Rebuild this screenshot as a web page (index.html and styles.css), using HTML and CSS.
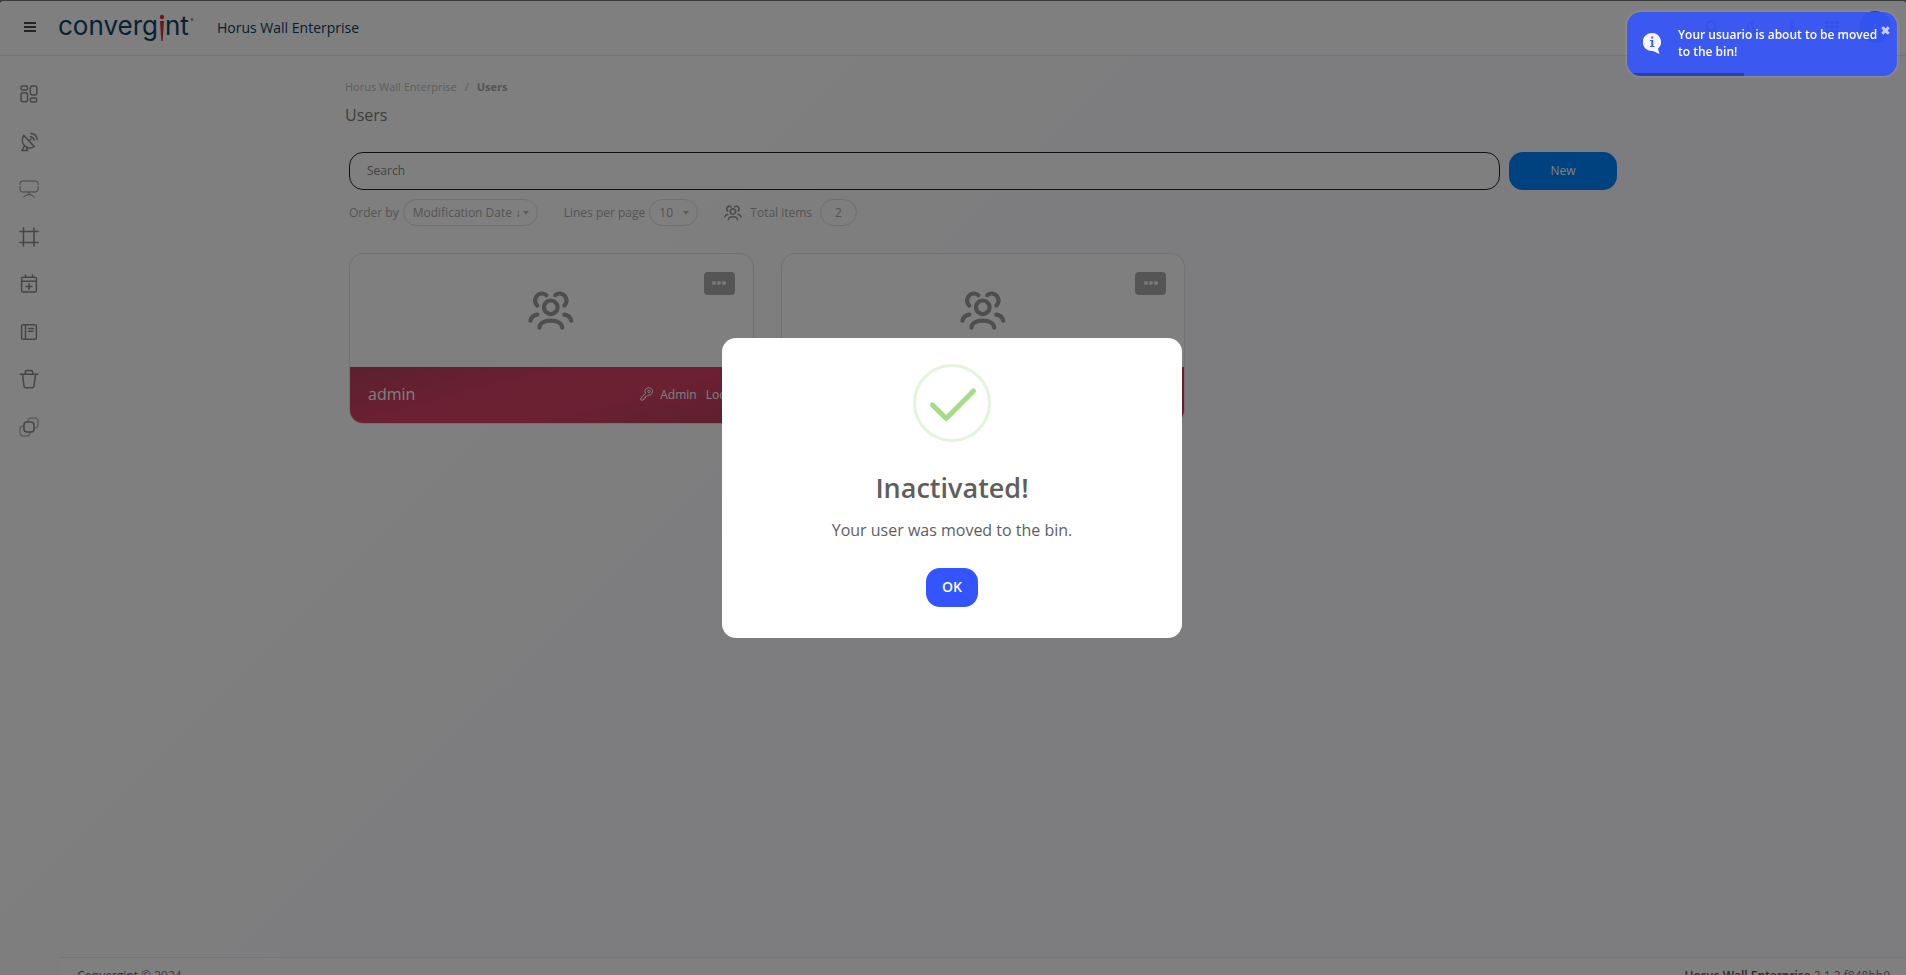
FILE: index.html
```html
<!DOCTYPE html>
<html lang="en">
<head>
<meta charset="utf-8">
<title>Horus Wall Enterprise - Users</title>
<link rel="stylesheet" href="styles.css">
</head>
<body>
<svg class="defs" aria-hidden="true">
  <symbol id="users" viewBox="0 0 46 40">
    <g fill="none" stroke="currentColor" stroke-width="4.2" stroke-linecap="round" stroke-linejoin="round">
      <circle cx="22.8" cy="16.3" r="6.8"/>
      <path d="M11.4 36.6C11.8 32 17 29.6 22.8 29.6S33.8 32 34.2 36.6"/>
      <path d="M9.2 14.6C6.600 11.500 6.500 8 8.600 5.200C11 2.200 15.200 1.800 18.300 4.200"/>
      <path d="M36.400 14.600C39 11.500 39.100 8 37 5.200C34.600 2.200 30.400 1.800 27.300 4.200"/>
      <path d="M2.400 29.600C2.900 26.400 5.500 24.200 9.300 23.600M43.200 29.600C42.700 26.400 40.100 24.200 36.300 23.600"/>
    </g>
  </symbol>
</svg>
<div class="app">
  <header class="topbar">
    <button class="icon-button menu" aria-label="Menu">
      <svg width="12" height="10" viewBox="0 0 12 10"><path d="M0 1h12M0 5h12M0 9h12" stroke="currentColor" stroke-width="1.600"/></svg>
    </button>
    <a class="logo" href="#" aria-label="Convergint">
      <svg width="138" height="36" viewBox="0 0 138 36">
        <text x="0" y="26" class="logo-text">converg</text>
        <text x="107" y="26" class="logo-text">nt</text>
        <circle cx="104" cy="8" r="2.200" fill="#d8332c"/>
        <path d="M102 12h4l-1.300 20h-1.400z" fill="#d8332c"/>
        <circle cx="134" cy="10.500" r="1" fill="none" stroke="#0b456b" stroke-width=".6"/>
      </svg>
    </a>
    <span class="product">Horus Wall Enterprise</span>
    <nav class="tools" aria-label="Tools">
      <button class="icon-button" aria-label="Search"><svg width="14" height="14" viewBox="0 0 14 14" fill="none" stroke="currentColor" stroke-width="2"><circle cx="6" cy="6" r="4.500"/><path d="M9 9l4 4"/></svg></button>
      <button class="icon-button" aria-label="Dark mode"><svg width="14" height="14" viewBox="0 0 14 14" fill="none" stroke="currentColor" stroke-width="1.300"><path d="M8 1.500A5.500 5.500 0 1 0 12 11A6 6 0 0 1 8 1.500z"/></svg></button>
      <button class="icon-button" aria-label="Information"><svg width="14" height="14" viewBox="0 0 14 14" fill="currentColor"><circle cx="7" cy="2" r="2"/><path d="M4.500 5h4v7h1.500v2h-6v-2h1.500v-5h-1z"/></svg></button>
      <button class="icon-button" aria-label="Applications"><svg width="14" height="14" viewBox="0 0 14 14" fill="currentColor"><path d="M0 1h4v3H0zM5 1h4v3H5zM10 1h4v3h-4zM0 5.500h4v3H0zM5 5.500h4v3H5zM10 5.500h4v3h-4zM0 10h4v3H0zM5 10h4v3H5zM10 10h4v3h-4z"/></svg></button>
      <button class="avatar">A</button>
    </nav>
  </header>

  <div class="layout">
    <nav class="sidebar" aria-label="Main">
      <a href="#" aria-label="Dashboard"><svg viewBox="0 0 20 20"><rect x="2" y="2" width="6.500" height="4" rx="1.600"/><rect x="11.300" y="2" width="6.500" height="9" rx="2"/><rect x="2" y="8.800" width="6.500" height="9" rx="2"/><rect x="11.300" y="13.900" width="6.500" height="4" rx="1.600"/></svg></a>
      <a href="#" aria-label="Sources"><svg viewBox="0 0 20 20"><path d="M4.800 3.500C2.600 7 3 11.200 5.600 13.800C8.200 16.200 12.400 16.800 15.200 14.500zM10 9l2-2M5.500 14l-2.500 4.500h5.500l-1-3M11.500 4.800C13.500 5 14.800 6.400 15 8.300M12 1.500C15.500 1.800 17.800 4.200 18 7.500"/></svg></a>
      <a href="#" aria-label="Displays"><svg class="thin" viewBox="0 0 20 20"><path d="M1 5.500V4.500Q1 2 3.500 2H16.500Q19 2 19 4.500V5.500M1 7.500V10.500Q1 13 3.500 13H16.500Q19 13 19 10.500V7.500M10 13v2.500M4.500 18Q7 15.500 10 15.500T15.500 18"/></svg></a>
      <a href="#" aria-label="Layouts"><svg viewBox="0 0 20 20"><path d="M4.500 1v18M15 1v18M1 4.500h18M1 15.500h18"/></svg></a>
      <a href="#" aria-label="Calendar"><svg viewBox="0 0 20 20"><rect x="2.600" y="3.300" width="14.800" height="14.600" rx="1.500"/><path d="M2.600 7.200h14.800M6.500 1v2M13.500 1v2M10 9.500v6M7 12.500h6"/></svg></a>
      <a href="#" aria-label="Journal"><svg viewBox="0 0 20 20"><rect x="2.600" y="2.800" width="14.800" height="14.400" rx="1.500"/><path d="M6.500 2.800v14.400M9.500 6.500h5M9.500 9.300h4.500"/></svg></a>
      <a href="#" aria-label="Bin"><svg viewBox="0 0 20 20"><path d="M1.200 5.300h17.600M3.500 5.300L5 17Q5.200 18.800 7 18.800H13Q14.800 18.800 15 17L16.500 5.300M6.300 5V3.500Q6.300 1.500 8.300 1.500H11.700Q13.700 1.500 13.700 3.500V5"/></svg></a>
      <a href="#" aria-label="Integrations"><svg viewBox="0 0 20 20"><rect x="5" y="5" width="10" height="10" rx="3"/><path class="faint" d="M9 4.500Q9 1 12.500 1H15.500Q19 1 19 4.500V7.500Q19 11 15.500 11M4.500 9Q1 9 1 12.500V15.500Q1 19 4.500 19H7.500Q11 19 11 15.500"/></svg></a>
    </nav>

    <div class="page">
      <main class="content">
        <nav class="breadcrumb" aria-label="Breadcrumb"><a href="#">Horus Wall Enterprise</a><span>/</span><b>Users</b></nav>
        <h1>Users</h1>
        <form class="search-row">
          <input type="text" placeholder="Search" aria-label="Search">
          <button type="button" class="new">New</button>
        </form>
        <div class="filters">
          <div class="filter">
            <label for="order">Order by</label>
            <span class="pill"><select id="order"><option>Modification Date ↓</option></select></span>
          </div>
          <div class="filter">
            <label for="lines">Lines per page</label>
            <span class="pill lines"><select id="lines"><option>10</option></select></span>
          </div>
          <div class="filter total">
            <svg width="18" height="16"><use href="#users"/></svg>
            <span>Total items</span>
            <span class="count">2</span>
          </div>
        </div>
        <div class="cards">
          <article class="card">
            <div class="card-top">
              <svg width="46" height="40"><use href="#users"/></svg>
              <button class="more" aria-label="More options"><i></i><i></i><i></i></button>
            </div>
            <div class="card-foot">
              <h2>admin</h2>
              <span class="role"><svg width="13" height="14" viewBox="0 0 13 14" fill="none" stroke="currentColor"><path d="M5.500 6.500A3.800 3.800 0 1 1 8 8.200L6.500 9.500L5.500 9.500V11H4V12.500L1 13.300L.7 11z"/><circle cx="9" cy="4.400" r="1.200"/></svg>Admin</span>
              <span>Local</span>
            </div>
          </article>
          <article class="card">
            <div class="card-top">
              <svg width="46" height="40"><use href="#users"/></svg>
              <button class="more" aria-label="More options"><i></i><i></i><i></i></button>
            </div>
            <div class="card-foot"></div>
          </article>
        </div>
      </main>
      <footer class="footer">
        <span><a href="#">Convergint</a> © 2024</span>
        <span><b>Horus Wall Enterprise</b> 2.1.2.f848bb0</span>
      </footer>
    </div>
  </div>
</div>

<div class="overlay">
  <section class="modal" role="dialog" aria-modal="true" aria-labelledby="modal-title">
    <svg class="check" width="78" height="78" viewBox="0 0 78 78" fill="none">
      <circle cx="39" cy="39" r="37.500" stroke="#e4f4db" stroke-width="3"/>
      <path d="M19.500 41L33.200 54.500L60.500 27" stroke="#a5dc86" stroke-width="5" stroke-linecap="round" stroke-linejoin="round"/>
    </svg>
    <h2 id="modal-title">Inactivated!</h2>
    <p>Your user was moved to the bin.</p>
    <button class="ok">OK</button>
  </section>
</div>

<aside class="toast" role="status">
  <svg width="18" height="22" viewBox="0 0 18 22"><path d="M9 0a9 9 0 0 1 6 15.700L16.500 21L10 17.900A9 9 0 1 1 9 0z" fill="#f4f5ff"/><path d="M8.200 3.500h2v2h-2zM7 7h3.200v6h1.300v1H7v-1h1.300V8H7z" fill="#3d5bf5"/></svg>
  <p>Your usuario is about to be moved to the bin!</p>
  <button class="close" aria-label="Close"><svg width="9" height="9" viewBox="0 0 9 9"><path d="M1.300 1.300l6.400 6.400M7.700 1.300l-6.400 6.400" stroke="currentColor" stroke-width="3"/></svg></button>
  <div class="progress"></div>
</aside>
</body>
</html>
```
FILE: styles.css
```css
* { box-sizing: border-box; }
html, body { height: 100%; }
body {
  margin: 0;
  overflow: hidden;
  background: #777;
  color: #7b7b7b;
  font-family: "Open Sans", "Noto Sans", sans-serif;
  font-size: 12px;
}
h1, h2, p { margin: 0; font-weight: 400; }
a { color: inherit; text-decoration: none; }
button, input, select { font: inherit; color: inherit; }
button { border: 0; padding: 0; cursor: pointer; }
.defs { position: absolute; width: 0; height: 0; }

.app {
  margin-top: 1px;
  border-radius: 4px 4px 0 0;
  background: linear-gradient(135deg, #fff 25%, #fafaff 50%);
}

/* Top bar */
.topbar {
  display: flex;
  align-items: center;
  height: 55px;
  padding: 0 15px 2px 24px;
  border-bottom: 1px solid #e8e8ec;
  border-radius: 4px 4px 0 0;
  background: #fff;
  color: #0a3a5c;
}
.icon-button { display: flex; background: none; }
.menu { color: #111; }
.logo { display: flex; margin-left: 22px; }
.logo-text { font: 400 26px Inter, sans-serif; fill: #0b456b; }
.product { margin-left: 21px; font-size: 14px; font-weight: 500; }
.tools { display: flex; align-items: center; gap: 26px; margin-left: auto; }
.avatar {
  width: 32px;
  height: 32px;
  margin-left: -6px;
  border-radius: 50%;
  background: #2a55c0;
  color: #fff;
}

/* Sidebar */
.layout { display: flex; min-height: calc(100vh - 74px); }
.sidebar {
  display: flex;
  flex-direction: column;
  align-items: center;
  align-self: flex-start;
  justify-content: space-between;
  flex: none;
  width: 58px;
  height: 381px;
  padding-top: 28px;
  color: #8a8a8a;
}
.sidebar a { display: flex; }
.sidebar svg {
  width: 20px;
  height: 20px;
  fill: none;
  stroke: currentColor;
  stroke-width: 1.5;
  stroke-linecap: round;
}
.sidebar .thin { stroke-width: 1; }
.sidebar .faint { opacity: .6; }

/* Page */
.page {
  display: flex;
  flex: 1;
  flex-direction: column;
  margin-left: 2px;
}
.content {
  width: 100%;
  max-width: 1276px;
  min-height: calc(100vh - 74px);
  margin: 0 auto;
  padding-top: 24px;
}
.breadcrumb {
  display: flex;
  gap: 8px;
  font-size: 11px;
  line-height: 14px;
  color: #bbb;
}
.breadcrumb b { color: #a8a8a8; }
h1 { margin-top: 9px; font-size: 16px; line-height: 24px; }
.search-row { display: flex; gap: 9px; margin: 25px 4px 0; }
.search-row input {
  flex: 1;
  min-width: 0;
  height: 38px;
  padding: 0 17px 2px;
  border: 1px solid #222;
  border-radius: 14px;
  background: #fff;
  font-size: 12px;
}
.search-row input::placeholder { color: #888; opacity: 1; }
.new {
  width: 108px;
  padding-bottom: 1px;
  border-radius: 14px;
  background: #0084ff;
  color: #fff;
}
.filters {
  display: flex;
  gap: 26px;
  margin: 9px 4px 0;
  color: #aaa;
}
.filter { display: flex; align-items: center; gap: 4px; }
.pill, .count {
  position: relative;
  display: flex;
  align-items: center;
  height: 27px;
  border: 1px solid #e0e0e0;
  border-radius: 14px;
}
.pill::after {
  content: "";
  position: absolute;
  right: 8px;
  border: 3px solid transparent;
  border-top: 4px solid #bbb;
  border-bottom: 0;
  pointer-events: none;
}
.pill select {
  height: 25px;
  padding: 0 15px 0 9px;
  border: 0;
  background: none;
  appearance: none;
}
.lines select { padding-right: 24px; }
.total { gap: 8px; }
.total svg { color: #999; }
.count { padding: 0 14px; }

/* Cards */
.cards {
  display: grid;
  grid-template-columns: repeat(3, 1fr);
  gap: 27px;
  margin: 27px 4px 0;
}
.card {
  border: 1px solid #e4e4e8;
  border-radius: 14px;
  background: #fff;
  overflow: hidden;
}
.card-top {
  position: relative;
  display: flex;
  justify-content: center;
  height: 113px;
  padding-top: 37px;
  color: #9c9c9c;
}
.more {
  position: absolute;
  top: 18px;
  right: 18px;
  display: flex;
  align-items: center;
  justify-content: center;
  gap: 1px;
  width: 31px;
  height: 23px;
  padding-bottom: 1px;
  border-radius: 4px;
  background: #aaa;
}
.more i { width: 4px; height: 4px; border-radius: 50%; background: #f4f4f4; }
.card-foot {
  display: flex;
  align-items: center;
  gap: 9px;
  height: 56px;
  padding: 0 18px 2px;
  background: linear-gradient(165deg, #b8405c, #d84265 40%, #d84265 60%, #b8405c);
  color: #fff;
}
.card-foot h2 { flex: 1; font-size: 16px; }
.role { display: flex; align-items: center; gap: 7px; }

/* Footer */
.footer {
  display: flex;
  justify-content: space-between;
  padding: 8px 16px 16px 17px;
  border-top: 1px solid #ececf4;
  background: #fff;
  line-height: 20px;
}
.footer a { color: #1f6fa5; }
.footer b { color: #555; font-weight: 600; }

/* Dialog */
.overlay {
  position: fixed;
  inset: 0;
  display: flex;
  align-items: center;
  justify-content: center;
  padding-right: 2px;
  background: rgba(0, 0, 0, .5);
}
.modal {
  display: flex;
  flex-direction: column;
  align-items: center;
  width: 460px;
  padding: 26px 20px 31px;
  border-radius: 14px;
  background: #fff;
  color: #5e5e5e;
}
.modal h2 { margin-top: 26px; font-size: 27px; font-weight: 600; line-height: 40px; }
.modal p { margin-top: 10px; font-size: 16px; line-height: 24px; }
.ok {
  width: 52px;
  height: 39px;
  margin-top: 26px;
  padding-bottom: 1px;
  border-radius: 14px;
  background: #3454ff;
  color: #fff;
  font-size: 14px;
  font-weight: 600;
}

/* Notification */
.toast {
  position: fixed;
  top: 12px;
  right: 9px;
  display: flex;
  align-items: center;
  gap: 17px;
  width: 270px;
  height: 64px;
  padding: 0 16px;
  border-radius: 14px;
  background: rgba(54, 86, 250, .93);
  box-shadow: 0 0 3px rgba(255, 255, 255, .3);
  color: #fff;
  overflow: hidden;
}
.toast > svg { flex: none; }
.toast p { flex: 1; padding-bottom: 3px; font-weight: 600; line-height: 17px; }
.close {
  position: absolute;
  top: 14px;
  right: 7px;
  display: flex;
  background: none;
  color: #c8d0fb;
}
.progress {
  position: absolute;
  left: 0;
  bottom: 0;
  width: 117px;
  height: 3px;
  background: #2a40a8;
}
```
